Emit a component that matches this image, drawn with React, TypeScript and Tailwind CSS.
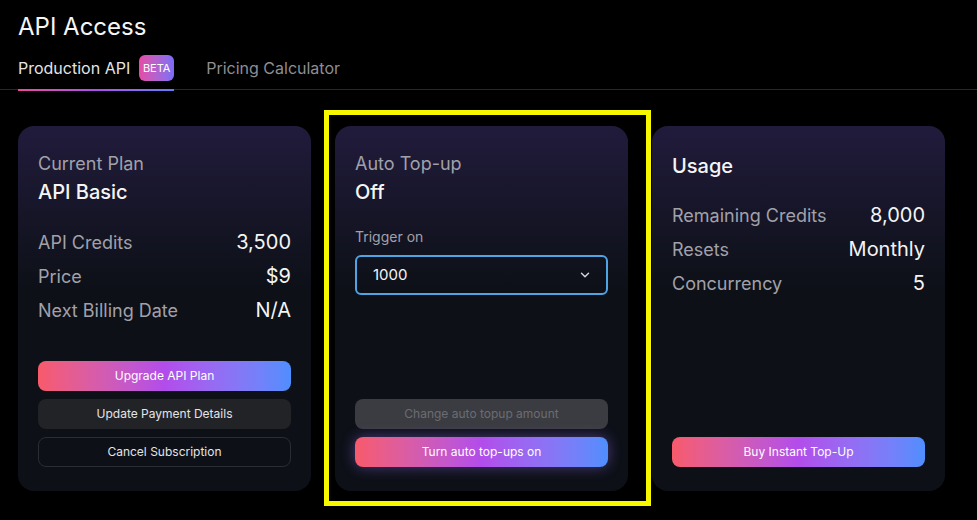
import { ChevronDown } from "lucide-react";

const GRAD = "bg-linear-to-r from-[#f85a6a] via-[#b24ceb] to-[#4e8efe]";

function Row({ label, value }: { label: string; value: string }) {
  return (
    <div className="flex h-[34px] items-center justify-between">
      <span className="text-[18px] text-[#a1a1aa]">{label}</span>
      <span className="text-[20px] text-[#f4f4f5]">{value}</span>
    </div>
  );
}

function Card({ children }: { children: React.ReactNode }) {
  return (
    <div className="flex h-[365px] w-[293px] flex-col rounded-[16px] bg-linear-to-b from-[#211b3c] to-[#0d1017] to-45% px-5 pt-[26px] pb-6">
      {children}
    </div>
  );
}

export default function App() {
  return (
    <div className="relative min-h-[520px] bg-black font-['Inter',sans-serif] text-white">
      {/* header */}
      <div className="border-b border-[#27272a] px-[18px] pt-[11px]">
        <h1 className="text-[24px] leading-[32px] font-normal text-[#f5f5f5]">API Access</h1>
        <div className="mt-[12px] flex items-center gap-8">
          <div className="relative flex items-center gap-[9px] pb-[8px]">
            <span className="text-[16px] text-[#e4e4e7]">Production API</span>
            <span className="flex h-[26px] w-[35px] items-center justify-center rounded-md bg-linear-to-r from-[#e649a6] to-[#7a6cf6] text-[11px] text-white">
              BETA
            </span>
            <div className="absolute right-0 -bottom-[2px] left-0 h-[2px] bg-linear-to-r from-[#ec4899] via-[#b04cf0] to-[#5f7dfa]" />
          </div>
          <span className="pb-[8px] text-[16px] text-[#8e8e93]">Pricing Calculator</span>
        </div>
      </div>

      {/* cards */}
      <div className="flex gap-6 px-[18px] pt-[36px]">
        <Card>
          <div className="text-[18px] leading-[24px] text-[#a1a1aa]">Current Plan</div>
          <div className="mt-[2px] text-[20px] leading-[28px] font-medium text-[#f5f5f5]">API Basic</div>
          <div className="mt-[19px]">
            <Row label="API Credits" value="3,500" />
            <Row label="Price" value="$9" />
            <Row label="Next Billing Date" value="N/A" />
          </div>
          <div className="mt-auto flex flex-col gap-2">
            <button className={`h-[30px] rounded-lg ${GRAD} text-[12px] text-white`}>Upgrade API Plan</button>
            <button className="h-[30px] rounded-lg bg-[#222327] text-[12px] text-[#e4e4e7]">Update Payment Details</button>
            <button className="h-[30px] rounded-lg border border-[#2c2d33] text-[12px] text-[#e4e4e7]">Cancel Subscription</button>
          </div>
        </Card>

        <Card>
          <div className="text-[18px] leading-[24px] text-[#a1a1aa]">Auto Top-up</div>
          <div className="mt-[2px] text-[20px] leading-[28px] font-medium text-[#f5f5f5]">Off</div>
          <div className="mt-[21px] text-[14px] leading-[20px] text-[#a1a1aa]">Trigger on</div>
          <div className="mt-2 flex h-[40px] items-center justify-between rounded-md border-2 border-[#4fa4e4] pr-[14px] pl-4">
            <span className="text-[15px] text-[#f4f4f5]">1000</span>
            <ChevronDown size={14} strokeWidth={2.5} className="text-[#d4d4d8]" />
          </div>
          <div className="mt-auto flex flex-col gap-2">
            <button className="h-[30px] rounded-lg bg-[#3b3c41] text-[12px] text-[#6b6c72]">Change auto topup amount</button>
            <button className={`h-[30px] rounded-lg ${GRAD} text-[12px] text-white shadow-[0_0_14px_rgba(150,110,255,0.45)]`}>
              Turn auto top-ups on
            </button>
          </div>
        </Card>

        <Card>
          <div className="text-[20px] leading-[28px] font-medium text-[#f5f5f5]">Usage</div>
          <div className="mt-[18px]">
            <Row label="Remaining Credits" value="8,000" />
            <Row label="Resets" value="Monthly" />
            <Row label="Concurrency" value="5" />
          </div>
          <div className="mt-auto">
            <button className={`h-[30px] w-full rounded-lg ${GRAD} text-[12px] text-white`}>Buy Instant Top-Up</button>
          </div>
        </Card>
      </div>

      {/* highlight overlay */}
      <div className="pointer-events-none absolute top-[110px] left-[324px] h-[396px] w-[327px] border-[5px] border-[#f7f700]" />
    </div>
  );
}
